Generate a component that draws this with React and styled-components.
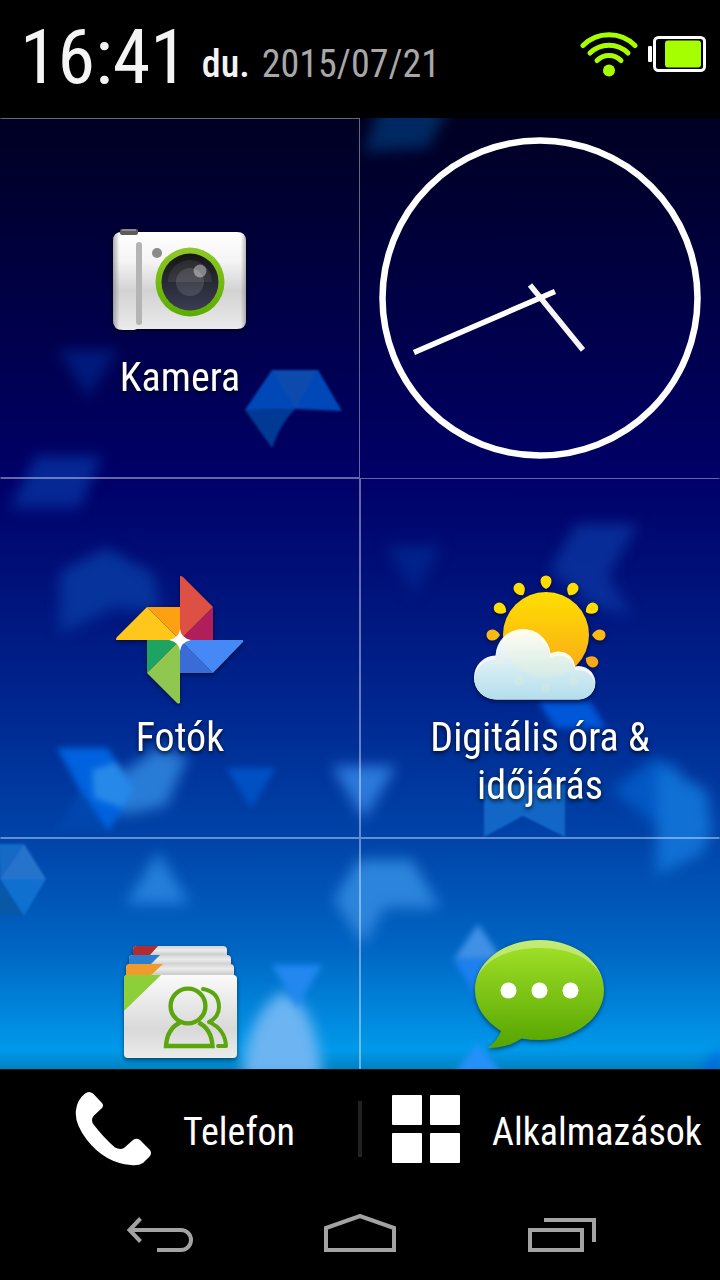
import React from 'react';
import styled, { createGlobalStyle } from 'styled-components';

const GlobalStyle = createGlobalStyle`
  * {
    box-sizing: border-box;
  }

  body {
    margin: 0;
    background: #000;
    color: #fff;
    font-family: 'Roboto Condensed', 'Liberation Sans Narrow', Roboto, sans-serif;
  }
`;

const Screen = styled.div`
  display: flex;
  flex-direction: column;
  height: 100vh;
`;

const StatusBar = styled.header`
  display: flex;
  align-items: center;
  flex: 0 0 118px;
  padding: 0 14px 4px 20px;
`;

const Clock = styled.time`
  font-size: 76px;
  line-height: 96px;
  color: #f4f4f4;
`;

const DayInfo = styled.div`
  display: flex;
  gap: 12px;
  margin: 14px auto 0 14px;
  font-size: 38px;
  line-height: 48px;
`;

const Meridiem = styled.span`
  color: #f4f4f4;
  font-weight: 500;
`;

const Today = styled.time`
  color: #a8a8a8;
`;

const StatusIcons = styled.div`
  display: flex;
  align-items: center;
  gap: 10px;
  padding-bottom: 6px;
`;

const Home = styled.main`
  position: relative;
  flex: 1;
  min-height: 0;
  overflow: hidden;
`;

const WallpaperArt = styled.svg`
  position: absolute;
  inset: 0;
  width: 100%;
  height: 100%;
`;

const Tiles = styled.div`
  position: relative;
  display: grid;
  grid-template-columns: 1fr 1fr;
  grid-auto-rows: 360px;
`;

const Tile = styled.button`
  display: flex;
  flex-direction: column;
  align-items: center;
  padding: 89px 40px 0;
  border: 1px solid rgba(255, 255, 255, 0.4);
  background: none;
  color: inherit;
  font: inherit;
  font-size: 40px;
  line-height: 48px;
  text-shadow: 0 2px 4px rgba(0, 0, 0, 0.8);

  &:nth-child(odd) {
    border-left-color: transparent;
  }

  &:nth-child(even) {
    border-right-color: transparent;
  }
`;

const TileIcon = styled.svg`
  flex: none;
  width: 144px;
  height: 144px;
  margin-bottom: 2px;
  overflow: visible;
  filter: drop-shadow(0 2px 2px rgba(0, 0, 0, 0.5));
`;

const ClockTile = styled.div`
  display: flex;
  align-items: center;
  justify-content: center;
`;

const Dock = styled.nav`
  display: flex;
  align-items: center;
  flex: 0 0 115px;
  padding-top: 4px;
  border-top: 1px solid #101010;
`;

const DockButton = styled.button`
  display: flex;
  align-items: center;
  justify-content: center;
  flex: 1 1 0;
  gap: 32px;
  height: 100%;
  padding: 0 0 0 12px;
  border: 0;
  background: none;
  color: inherit;
  font: inherit;
  font-size: 38px;
  line-height: 48px;
`;

const DockLabel = styled.span`
  padding-top: 6px;
`;

const DockDivider = styled.span`
  width: 4px;
  height: 56px;
  background: #222;
`;

const NavBar = styled.nav`
  display: grid;
  grid-template-columns: repeat(3, 1fr);
  flex: 0 0 96px;
  padding: 4px 60px 0;
`;

const NavButton = styled.button`
  display: flex;
  align-items: center;
  justify-content: center;
  border: 0;
  padding: 0;
  background: none;
  color: #a3a3a3;
`;

const Wallpaper = () => (
  <WallpaperArt viewBox="0 118 720 951" preserveAspectRatio="none" aria-hidden="true">
    <defs>
      <linearGradient id="sky" x1="0" y1="0" x2="0" y2="1">
        <stop offset="0" stopColor="#000022" />
        <stop offset="0.38" stopColor="#000068" />
        <stop offset="0.6" stopColor="#00238c" />
        <stop offset="0.76" stopColor="#0044a9" />
        <stop offset="0.87" stopColor="#0064c2" />
        <stop offset="0.98" stopColor="#0099ea" />
        <stop offset="1" stopColor="#0082c4" />
      </linearGradient>
      <filter id="near" x="-20%" y="-20%" width="140%" height="140%" colorInterpolationFilters="sRGB">
        <feGaussianBlur stdDeviation="1" />
      </filter>
      <filter id="middle" x="-20%" y="-20%" width="140%" height="140%" colorInterpolationFilters="sRGB">
        <feGaussianBlur stdDeviation="3" />
      </filter>
      <filter id="far" x="-40%" y="-40%" width="180%" height="180%" colorInterpolationFilters="sRGB">
        <feGaussianBlur stdDeviation="7" />
      </filter>
    </defs>
    <rect y="118" width="720" height="951" fill="url(#sky)" />

    {/* far away shards */}
    <g filter="url(#far)">
      <path d="M382 100h70l-24 48-64 4z" fill="#002862" />
      <path d="M58 350h60l-30 48z" fill="#001a7c" />
      <path d="M36 456h66l-22 52H10z" fill="#052894" />
      <path d="M60 572l46-24 48 26 6 38-46-4-54 26z" fill="#06349c" />
      <path d="M386 546h56l-28 50z" fill="#00228a" />
      <path d="M576 524h62l-30 52 24 40-40-10-42-36z" fill="#0a34a0" opacity="0.8" />
      <path d="M88 782l42-14 26-20 32 8-22 50-38 8-30-4z" fill="#2e84dc" opacity="0.9" />
      <path d="M332 766h64l-32 54z" fill="#2c7adc" />
      <path d="M612 790l42-32 26 8v46l-26 12z" fill="#0258c4" />
      <path d="M658 764l48 26 6 40-10 24-46 22z" fill="#1070d4" />
      <path d="M158 852l-32 52h64z" fill="#247fda" />
      <path d="M358 860h54l28 48h-56l-20 38-30-46z" fill="#2c84dc" />
      <path d="M284 992c18 6 34 30 38 86h-80c2-46 22-78 42-86z" fill="#6cb4f2" />
      <path d="M698 1076l24-30v30z" fill="#0062e0" />
    </g>

    {/* middle distance */}
    <g filter="url(#middle)">
      <path d="M57 748h51l26 42-26 42-28-42z" fill="#0062de" />
      <path d="M92 770l24-8 18 28-12 18-28-10z" fill="#369aee" opacity="0.7" />
      <path d="M56 830l24-40 28 40z" fill="#0046ac" />
      <path d="M226 768h50l-25 40z" fill="#0050c4" />
      <path d="M538 702h52l16 26h-50z" fill="#0058d8" />
      <path d="M272 965h50l-25 42z" fill="#2288f0" />
      <path d="M478 924l24 35h-48z" fill="#4090e6" />
      <path d="M454 960h48l-24 41z" fill="#1c80f0" />
      <path d="M478 1043l24 30h-48z" fill="#2490f8" />
    </g>

    {/* sharp ones up front */}
    <g filter="url(#near)">
      <path d="M272 370h46l24 41-47-2-50 1z" fill="#0048b8" />
      <path d="M272 370h46l-23 39z" fill="#0c4aae" />
      <path d="M245 410l50-1q-14 14-23 39z" fill="#003a94" />
      <path d="M484 784h81v52l-42-21-39 21z" fill="#1266c6" />
      <path d="M484 836l39-21 42 21" fill="none" stroke="#1c78e0" />
      <path d="M-2 844h26L0 879z" fill="#146ac4" />
      <path d="M24 844l22 35H0z" fill="#2673cc" />
      <path d="M0 879h46l-22 37z" fill="#1070d0" />
      <path d="M-2 879l26 37H-2z" fill="#0858a8" />
    </g>
  </WallpaperArt>
);

const CAMERA_BODY = 'M14 24h115q9 0 9 9v79q0 9-9 9H29l-3 1H15q-10 0-10-10V33q0-9 9-9z';

const CameraIcon = () => (
  <TileIcon viewBox="0 0 144 144" aria-hidden="true">
    <defs>
      <linearGradient id="camBody" x1="0" y1="0" x2="0" y2="1">
        <stop offset="0" stopColor="#fff" />
        <stop offset="0.3" stopColor="#f4f4f4" />
        <stop offset="0.6" stopColor="#d2d2d2" />
        <stop offset="1" stopColor="#ebebeb" />
      </linearGradient>
      <linearGradient id="camRing" x1="0" y1="0" x2="0" y2="1">
        <stop offset="0" stopColor="#90c828" />
        <stop offset="1" stopColor="#5aac00" />
      </linearGradient>
      <linearGradient id="camLens" x1="0" y1="0" x2="0" y2="1">
        <stop offset="0" stopColor="#161616" />
        <stop offset="1" stopColor="#3a3d54" />
      </linearGradient>
      <linearGradient id="camEdge">
        <stop offset="0" stopColor="#777" stopOpacity="0.6" />
        <stop offset="0.05" stopColor="#777" stopOpacity="0" />
        <stop offset="0.96" stopColor="#777" stopOpacity="0" />
        <stop offset="1" stopColor="#777" stopOpacity="0.5" />
      </linearGradient>
    </defs>
    <path d={CAMERA_BODY} fill="url(#camBody)" />
    <path d={CAMERA_BODY} fill="url(#camEdge)" />
    <rect x="12" y="21" width="18" height="6" rx="2" fill="#5c5c5c" />
    <path d="M14 22h14" stroke="#8a8a8a" strokeWidth="2" />
    <rect x="28" y="34" width="6" height="83" rx="3" fill="#b4b4b4" />
    <circle cx="49" cy="45" r="5" fill="#8b8b8b" />
    <circle cx="82" cy="74" r="34.5" fill="url(#camRing)" />
    <circle cx="82" cy="74" r="28.5" fill="url(#camLens)" />
    <path d="M60 74a22 22 0 0 1 44 0z" fill="#fff" opacity="0.08" />
    <circle cx="82" cy="74" r="14" fill="#fff" opacity="0.12" />
    <circle cx="92" cy="63" r="6.5" fill="#fff" opacity="0.4" />
  </TileIcon>
);

const PhotosIcon = () => (
  <TileIcon viewBox="0 0 144 144" aria-hidden="true">
    <path d="M39 39h33v33z" fill="#ff9f12" />
    <path d="M8 72q0-2 1-3l30-30 33 33z" fill="#ffc61c" />
    <path d="M72 72l33-33v33z" fill="#b01e5c" />
    <path d="M72 8q2 0 3 1l30 30-33 33z" fill="#de5043" />
    <path d="M72 72l33 33H72z" fill="#3a6cd8" />
    <path d="M72 72h63q1 2-1 3l-29 30z" fill="#4688f6" />
    <path d="M39 72h33l-33 33z" fill="#1ea362" />
    <path d="M72 72v63q-2 1-3 0l-30-30z" fill="#8fc750" />
    <path d="M72 61q1 9 11 11-10 2-11 11-1-9-11-11 10-2 11-11z" fill="#fff" />
  </TileIcon>
);

const RAYS = [0, 30, 60, 90, 120, 150, 180, 210, 240, 270, 300, 330];
const rayColor = (angle) => {
  if (angle === 90 || angle === 270) return '#fdb913';
  return angle > 90 && angle < 270 ? '#f9a61a' : '#ffdd00';
};
const CLOUD =
  'M28.5 131.5a22 22 0 0 1-1-44A27.6 27.6 0 0 1 82.5 85.5A16.5 16.5 0 0 1 107 98.5A16.7 16.7 0 1 1 110.5 131.5z';

const WeatherIcon = () => (
  <TileIcon viewBox="0 0 144 144" aria-hidden="true">
    <defs>
      <linearGradient id="sun" x1="0" y1="0" x2="0" y2="1">
        <stop offset="0" stopColor="#ffdf00" />
        <stop offset="1" stopColor="#f9a61a" />
      </linearGradient>
      <linearGradient id="cloud" x1="0" y1="0" x2="0" y2="1">
        <stop offset="0" stopColor="#fdfdfb" />
        <stop offset="1" stopColor="#aedcec" />
      </linearGradient>
      <clipPath id="cloudClip">
        <path d={CLOUD} />
      </clipPath>
    </defs>
    {RAYS.map((angle) => (
      <path
        key={angle}
        d="M78 21q-5.5-3-5.5-8a5.5 5.5 0 0 1 11 0q0 5-5.5 8z"
        fill={rayColor(angle)}
        transform={`rotate(${angle} 78 67)`}
      />
    ))}
    <circle cx="78" cy="67" r="43" fill="url(#sun)" />
    <path d={CLOUD} fill="#fff" opacity="0.96" />
    <g clipPath="url(#cloudClip)">
      <path d={CLOUD} fill="url(#cloud)" transform="translate(0 4)" />
      <g fill="#fff3b0" opacity="0.15">
        <circle cx="78" cy="67" r="43" />
        <circle cx="32" cy="93" r="5" />
        <circle cx="51" cy="113" r="5" />
        <circle cx="78" cy="120" r="5" />
        <circle cx="105" cy="113" r="5" />
      </g>
    </g>
  </TileIcon>
);

const ContactsIcon = () => (
  <TileIcon viewBox="0 0 144 144" aria-hidden="true">
    <defs>
      <linearGradient id="card" x1="0" y1="0" x2="0" y2="1">
        <stop offset="0" stopColor="#fafafa" />
        <stop offset="0.65" stopColor="#d9d9d9" />
        <stop offset="1" stopColor="#ebebeb" />
      </linearGradient>
      <linearGradient id="cardBack" x1="0" y1="0" x2="0" y2="1">
        <stop offset="0" stopColor="#d4d4d4" />
        <stop offset="0.35" stopColor="#ececec" />
        <stop offset="0.7" stopColor="#cfcfcf" />
      </linearGradient>
    </defs>
    <path d="M25 30v-8q0-4 4-4h86q4 0 4 4v8z" fill="url(#cardBack)" />
    <path d="M25 30v-8q0-4 4-4h21L41 28z" fill="#b02c30" />
    <path d="M21 40v-9q0-4 4-4h94q4 0 4 4v9z" fill="url(#cardBack)" />
    <path d="M21 40v-9q0-4 4-4h27L42 37z" fill="#2b7fd0" />
    <path d="M18 50V40q0-4 4-4h100q4 0 4 4v10z" fill="url(#cardBack)" />
    <path d="M18 50V40q0-4 4-4h33L40 50z" fill="#f19b2c" />
    <rect x="16" y="47" width="113" height="83" rx="4" fill="url(#card)" />
    <path d="M16 83V50q0-3 3-3h34z" fill="#8ccf38" />
    <g fill="none" stroke="#5aa60c" strokeWidth="4.4">
      <circle cx="80" cy="78" r="17.4" />
      <path d="M72 94.5Q59 101 58 118h46.5q-1-17-14-23.5" />
      <path d="M95 61q16 3 16 18 0 10-10 15 16 7 17 24h-8" strokeLinecap="round" strokeLinejoin="round" strokeWidth="4" />
    </g>
  </TileIcon>
);

const MessagesIcon = () => (
  <TileIcon viewBox="0 0 144 144" aria-hidden="true">
    <defs>
      <linearGradient id="bubble" x1="0" y1="0" x2="0" y2="1">
        <stop offset="0" stopColor="#a4e32a" />
        <stop offset="1" stopColor="#55a400" />
      </linearGradient>
      <clipPath id="bubbleClip">
        <ellipse cx="71.5" cy="62" rx="64.5" ry="50" />
      </clipPath>
    </defs>
    <path
      d="M71.5 12C107 12 136 34 136 62s-29 50-64.5 50q-9 0-18-1.5-14 10-34 9.5 10-7 13.5-17C17 93 7 79 7 62c0-28 29-50 64.5-50z"
      fill="url(#bubble)"
    />
    <path
      clipPath="url(#bubbleClip)"
      d="M6 62v-52h131v52C135 36 108 20 71.5 20S8 36 6 62z"
      fill="#fff"
      opacity="0.35"
    />
    <g fill="#fff">
      <circle cx="40.5" cy="62.5" r="8" />
      <circle cx="71.5" cy="62.5" r="8" />
      <circle cx="102.5" cy="62.5" r="8" />
    </g>
  </TileIcon>
);

const AnalogClock = () => (
  <svg width="360" height="360" viewBox="0 0 360 360" role="img" aria-label="16:41">
    <circle cx="180" cy="180" r="157.5" fill="none" stroke="#fff" strokeWidth="6.5" />
    <path d="M170 167l53 65" stroke="#f6f6f6" strokeWidth="5.5" />
    <path d="M54 234.5l141-61" stroke="#fff" strokeWidth="5.5" />
  </svg>
);

const WifiIcon = () => (
  <svg width="58" height="46" viewBox="0 0 58 46" aria-hidden="true">
    <g fill="none" stroke="#a6ff00" strokeWidth="5" strokeLinecap="round">
      <path d="M3 14.5a37 37 0 0 1 52 0" />
      <path d="M10 22a27 27 0 0 1 38 0" />
      <path d="M17 29.5a17 17 0 0 1 24 0" />
    </g>
    <circle cx="29" cy="39.5" r="6" fill="#a6ff00" />
  </svg>
);

const BatteryIcon = () => (
  <svg width="58" height="36" viewBox="0 0 58 36" aria-hidden="true">
    <rect x="0" y="10" width="4" height="16" rx="1" fill="#fff" />
    <rect x="6.5" y="1.5" width="50" height="33" rx="4" fill="none" stroke="#fff" strokeWidth="3" />
    <rect x="17" y="4.5" width="36" height="27" rx="3" fill="#a6ff00" />
  </svg>
);

const PhoneIcon = () => (
  <svg width="76" height="74" viewBox="0 0 76 74" aria-hidden="true">
    <path
      d="M10 1.5Q14-1.5 18 1.5L27 11q2 2.5 0 5l-8 7.5q-4 4.5 0 9.5 10 13 21 22.5 5 2.5 9 .5l9-8q3.5-2.5 7 0l10 10q2 3 0 6l-7 7Q63 74 56 73 30 71 12 48-1 31 1 18 2 8 10 1.5z"
      fill="#fff"
    />
  </svg>
);

const AppsIcon = () => (
  <svg width="68" height="68" viewBox="0 0 68 68" aria-hidden="true">
    <g fill="#fff">
      <rect width="30" height="30" rx="1" />
      <rect x="38" width="30" height="30" rx="1" />
      <rect y="38" width="30" height="30" rx="1" />
      <rect x="38" y="38" width="30" height="30" rx="1" />
    </g>
  </svg>
);

const navIcons = {
  Vissza: 'M20.5 4.5L9.5 16l11 11.5M9 16h52a10 10 0 0 1 0 20H37',
  'Kezdőképernyő': 'M6 36V14L40 2l34 12v22z',
  'Legutóbbi alkalmazások': 'M10 16h52v20H10zM24 6h50v22',
};

const tiles = [
  { label: 'Kamera', Icon: CameraIcon },
  { clock: true },
  { label: 'Fotók', Icon: PhotosIcon },
  { label: 'Digitális óra & időjárás', Icon: WeatherIcon },
  { label: '', name: 'Névjegyek', Icon: ContactsIcon },
  { label: '', name: 'Üzenetek', Icon: MessagesIcon },
];

const App = () => {
  return (
    <>
      <GlobalStyle />
      <Screen>
        <StatusBar>
          <Clock>16:41</Clock>
          <DayInfo>
            <Meridiem>du.</Meridiem>
            <Today dateTime="2015-07-21">2015/07/21</Today>
          </DayInfo>
          <StatusIcons>
            <WifiIcon />
            <BatteryIcon />
          </StatusIcons>
        </StatusBar>

        <Home>
          <Wallpaper />
          <Tiles>
            {tiles.map(({ label, name, clock, Icon }) =>
              clock ? (
                <ClockTile key="clock">
                  <AnalogClock />
                </ClockTile>
              ) : (
                <Tile key={label || name} type="button" aria-label={label || name}>
                  <Icon />
                  {label}
                </Tile>
              )
            )}
          </Tiles>
        </Home>

        <Dock>
          <DockButton type="button">
            <PhoneIcon />
            <DockLabel>Telefon</DockLabel>
          </DockButton>
          <DockDivider />
          <DockButton type="button">
            <AppsIcon />
            <DockLabel>Alkalmazások</DockLabel>
          </DockButton>
        </Dock>

        <NavBar>
          {Object.keys(navIcons).map((name) => (
            <NavButton key={name} type="button" aria-label={name}>
              <svg width="80" height="40" viewBox="0 0 80 40" fill="none" stroke="currentColor" strokeWidth="4">
                <path d={navIcons[name]} />
              </svg>
            </NavButton>
          ))}
        </NavBar>
      </Screen>
    </>
  );
};

export default App;
